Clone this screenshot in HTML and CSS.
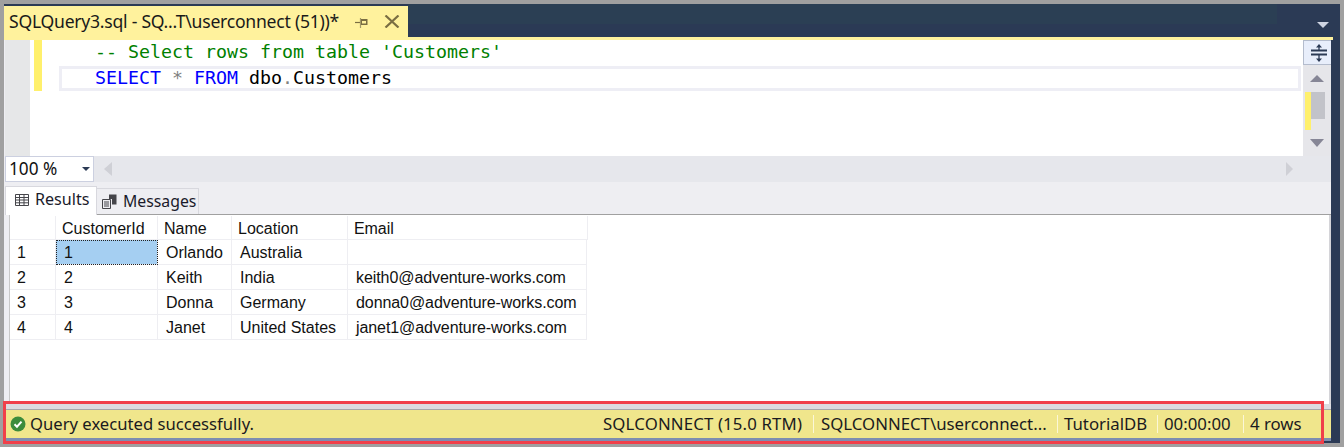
FILE: index.html
```html
<!DOCTYPE html>
<html lang="en">
<head>
<meta charset="utf-8">
<title>SQLQuery3.sql</title>
<link rel="stylesheet" href="styles.css">
</head>
<body>
<div class="window">
  <div class="tabstrip">
    <div class="doctab">
      <span class="doctab-title">SQLQuery3.sql - SQ...T\userconnect (51))*</span>
      <svg class="pin" width="13" height="10" viewBox="0 0 13 10"><path d="M0 4.500h5.500" stroke="#7a6e42" stroke-width="1.200"/><path d="M5.500 0v10" stroke="#a39a68" stroke-width="1.200"/><path d="M6 1h6.500v6H6z" fill="#7a6e42"/><path d="M7 3h4v2.500H7z" fill="#fff29d"/></svg>
      <svg class="close" width="16" height="13" viewBox="0 0 16 13"><path d="M1.500 .5l13 12M14.500 .5l-13 12" fill="none" stroke="#7a6e42" stroke-width="2.200"/></svg>
    </div>
    <div class="tabfill"></div>
    <svg class="overflow" width="12" height="6" viewBox="0 0 12 6"><path d="M0 0h12L6 6z" fill="#ced4e2"/></svg>
  </div>
  <div class="accent"></div>
  <div class="body">
    <div class="editor-row">
      <div class="gutter"></div>
      <div class="code">
        <div class="marker"></div>
        <div class="lines">
          <div class="line comment">-- Select rows from table 'Customers'</div>
          <div class="line current"><span class="kw">SELECT</span> <span class="op">*</span> <span class="kw">FROM</span> dbo<span class="op">.</span>Customers</div>
        </div>
      </div>
      <div class="vscroll">
        <div class="split">
          <svg width="16" height="20" viewBox="0 0 16 20"><path d="M0 7.500h16M0 11.500h16" stroke="#2b3a55" stroke-width="1.800"/><path d="M8 2v5M8 12v6" stroke="#2b3a55" stroke-width="1.300"/><path d="M5 4.500L8 1l3 3.500zM5 15.500L8 19l3-3.500z" fill="#2b3a55"/></svg>
        </div>
        <div class="vtrack">
          <svg class="varrow" width="14" height="7" viewBox="0 0 14 7"><path d="M7 0l7 7H0z" fill="#868696"/></svg>
          <div class="thumbzone">
            <div class="yellowmark"></div>
            <div class="thumb"></div>
          </div>
          <svg class="varrow" width="14" height="8" viewBox="0 0 14 8"><path d="M0 0h14L7 8z" fill="#868696"/></svg>
        </div>
      </div>
    </div>
    <div class="hbar">
      <div class="zoomcombo"><span>100 %</span><svg width="8" height="4" viewBox="0 0 8 4"><path d="M0 0h8L4 4z" fill="#2b3a55"/></svg></div>
      <svg class="harrow-l" width="8" height="14" viewBox="0 0 8 14"><path d="M8 0v14L0 7z" fill="#cfd0d6"/></svg>
      <div class="hspace"></div>
      <svg class="harrow-r" width="7" height="14" viewBox="0 0 7 14"><path d="M0 0v14l7-7z" fill="#cfd0d6"/></svg>
    </div>
    <div class="tabs">
      <div class="rtab active">
        <svg width="14" height="12" viewBox="0 0 14 12"><path d="M.5.500h13v11H.500zM.5 3.500h13M.5 6h13M.5 8.800h13M4.500 .5v11M9 .5v11" fill="none" stroke="#45454a" stroke-width="1"/></svg>
        <span>Results</span>
      </div>
      <div class="rtab">
        <svg width="15" height="15" viewBox="0 0 15 15"><path d="M.5 5.500h8v9h-8zM2 8h5M2 10h5M2 12h5" fill="none" stroke="#45454a"/><path d="M7 .5h7.500v10H10V5H7z" fill="#45454a"/></svg>
        <span>Messages</span>
      </div>
    </div>
    <div class="gridpane">
      <div class="grid">
        <div class="gr head">
          <div class="c c0"></div><div class="c c1">CustomerId</div><div class="c c2">Name</div><div class="c c3">Location</div><div class="c c4">Email</div>
        </div>
        <div class="gr">
          <div class="c c0">1</div><div class="c c1 sel">1</div><div class="c c2">Orlando</div><div class="c c3">Australia</div><div class="c c4"></div>
        </div>
        <div class="gr">
          <div class="c c0">2</div><div class="c c1">2</div><div class="c c2">Keith</div><div class="c c3">India</div><div class="c c4">keith0@adventure-works.com</div>
        </div>
        <div class="gr">
          <div class="c c0">3</div><div class="c c1">3</div><div class="c c2">Donna</div><div class="c c3">Germany</div><div class="c c4">donna0@adventure-works.com</div>
        </div>
        <div class="gr">
          <div class="c c0">4</div><div class="c c1">4</div><div class="c c2">Janet</div><div class="c c3">United States</div><div class="c c4">janet1@adventure-works.com</div>
        </div>
      </div>
    </div>
    <div class="status">
      <svg class="ok" width="16" height="16" viewBox="0 0 16 16"><circle cx="8" cy="8" r="7.500" fill="#3c8c3c"/><path d="M4.500 8.200l2.500 2.500 4.500-5" fill="none" stroke="#fff" stroke-width="2"/></svg>
      <span class="msg">Query executed successfully.</span>
      <span class="cell s1">SQLCONNECT (15.0 RTM)</span>
      <span class="cell s2">SQLCONNECT\userconnect...</span>
      <span class="cell s3">TutorialDB</span>
      <span class="cell s4">00:00:00</span>
      <span class="cell s5">4 rows</span>
    </div>
  </div>
  <div class="annotation"></div>
</div>
</body>
</html>
```
FILE: styles.css
```css
* { box-sizing: border-box; }
html, body { margin: 0; padding: 0; }
body {
  width: 1344px;
  height: 447px;
  overflow: hidden;
  background: #a0a0a0;
  padding: 4px;
  font-family: "Liberation Sans", Arial, sans-serif;
  color: #1a1a1a;
}
.window {
  position: relative;
  height: 439px;
  background: #2b3a55;
  display: flex;
  flex-direction: column;
  padding-bottom: 2px;
}
.tabstrip {
  height: 33px;
  display: flex;
  flex: none;
  position: relative;
}
.doctab {
  width: 404px;
  margin-top: 2px;
  background: #fff29d;
  display: flex;
  align-items: center;
  padding-left: 5px;
  color: #1a1a1a;
  font: 17.600px/1 "Noto Sans", sans-serif;
  letter-spacing: -0.25px;
}
.doctab-title { width: 346px; flex: none; white-space: nowrap; }
.pin { margin-top: 3px; flex: none; }
.close { margin-left: 16px; flex: none; }
.tabfill {
  width: 869px;
  height: 20px;
  background: #2b3f54;
}
.overflow { position: absolute; right: 11px; top: 18px; }
.accent {
  height: 3px;
  width: 1329px;
  flex: none;
  background: #fff29d;
}
.body {
  flex: 1;
  width: 1327px;
  padding-left: 1px;
  display: flex;
  flex-direction: column;
  min-height: 0;
  background: #eeeef2;
}
.editor-row { display: flex; height: 116px; flex: none; }
.gutter { width: 25px; background: #e6e7e8; }
.code {
  width: 1273px;
  background: #fff;
  display: flex;
  padding-left: 4px;
}
.marker { width: 8px; height: 51px; background: #fff06c; flex: none; }
.lines { flex: 1; margin-left: 17px; margin-right: 2px; }
.line {
  height: 25px;
  padding-left: 36px;
  font: 18.270px/23px "DejaVu Sans Mono", monospace;
  white-space: pre;
  color: #000;
}
.line.comment { color: #008000; height: 26px; }
.line.current {
  border: 3px solid #eeeef5;
  padding-left: 33px;
  line-height: 17px;
}
.kw { color: #0000ff; }
.op { color: #808080; }
.vscroll { width: 28px; flex: none; display: flex; flex-direction: column; background: #e6e6ea; }
.split {
  height: 25px;
  background: #e8eefb;
  border: 1px solid #b4bccd;
  border-right: none;
  display: flex;
  align-items: center;
  justify-content: center;
  padding-left: 2px;
  flex: none;
}
.vtrack {
  flex: 1;
  display: flex;
  flex-direction: column;
  align-items: center;
  padding-top: 10px;
}
.varrow { flex: none; }
.thumbzone {
  display: flex;
  align-self: flex-start;
  height: 38px;
  width: 20px;
  margin: 10px 0 9px 2px;
}
.yellowmark { width: 6px; height: 38px; background: #fff06c; }
.thumb { width: 14px; height: 27px; background: #c2c3c9; }
.hbar {
  height: 26px;
  flex: none;
  display: flex;
  align-items: center;
  background: #e6e7ec;
}
.zoomcombo {
  width: 89px;
  height: 26px;
  background: #fff;
  border: 1px solid #ccd0e0;
  display: flex;
  align-items: center;
  justify-content: space-between;
  padding: 0 3px 0 3px;
  font: 17.200px/1 "Noto Sans", sans-serif;
  color: #111;
}
.harrow-l { margin-left: 10px; }
.hspace { flex: 1; }
.harrow-r { margin-right: 38px; }
.tabs {
  height: 33px;
  flex: none;
  display: flex;
  align-items: flex-end;
  background: #eeeef2;
  border-bottom: 1px solid #a0a0a0;
}
.rtab {
  height: 26px;
  width: 103px;
  display: flex;
  align-items: center;
  gap: 6px;
  padding-left: 5px;
  border: 1px solid #d8d8de;
  border-bottom: none;
  margin-left: -1px;
  background: #eeeef2;
  font: 15.800px/1 "Noto Sans", sans-serif;
  color: #1a1a2a;
}
.rtab.active {
  height: 29px;
  width: 92px;
  margin-left: 0;
  background: #fff;
  padding-left: 9px;
  padding-bottom: 3px;
  font-size: 16.100px;
  position: relative;
  top: 1px;
}
.gridpane {
  height: 189px;
  flex: none;
  margin-left: 4px;
  background: #fff;
  border-left: 1px solid #c8c8c8;
  border-right: 2px solid #d4d4d8;
  padding-top: 1px;
}
.grid { width: 579px; font-size: 16px; }
.gr { display: flex; height: 25px; }
.gr.head { height: 24px; }
.c {
  flex: none;
  padding-left: 8px;
  line-height: 26px;
  border-right: 1px solid #eeeef2;
  border-bottom: 1px solid #eeeef2;
  color: #111;
  white-space: nowrap;
}
.gr.head .c { padding-left: 6px; }
.c0 { width: 46px; padding-left: 7px; }
.c1 { width: 102px; }
.c2 { width: 74px; }
.c3 { width: 116px; }
.c4 { width: 239px; letter-spacing: -0.08px; }
.gr.head .c4 { width: 240px; }
.sel { background: #a5cff2; outline: 1px dotted #222; outline-offset: -1px; }
.status {
  flex: 1;
  display: flex;
  align-items: center;
  background: #f0e68c;
  border-top: 5px solid #dcdce0;
  border-bottom: 3px solid #7d8db0;
  box-shadow: inset 0 1px 0 #a8a8a8;
  padding: 1px 0 0 5px;
  font: 16.800px/1 "Noto Sans", sans-serif;
  color: #1a1a20;
}
.ok { flex: none; }
.msg { margin-left: 4px; flex: 1; font-size: 16.650px; }
.cell { white-space: nowrap; display: block; padding: 0 0 0 6px; border-left: 1px solid #fbf7d8; line-height: 18px; }
.s1 { border-left: none; width: 210px; padding-left: 0; letter-spacing: 0.15px; }
.s2 { width: 244px; padding-left: 7px; }
.s3 { width: 100px; }
.s4 { width: 86px; }
.s5 { width: 88px; }
.annotation {
  position: absolute;
  left: -1px;
  top: 397px;
  width: 1321px;
  height: 43px;
  border: 3px solid #f0404a;
}
```
